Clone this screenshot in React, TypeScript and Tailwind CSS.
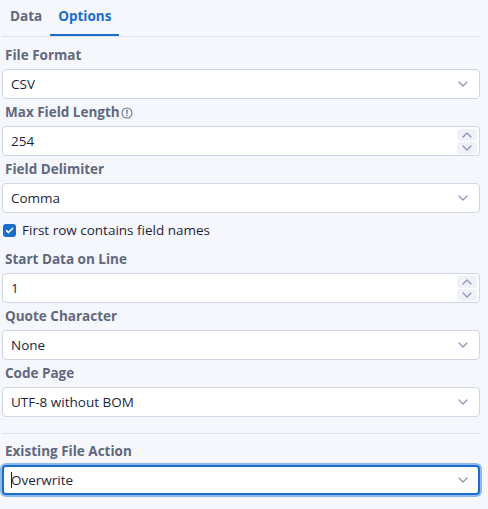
import React from "react";

const font = { fontFamily: '"Open Sans", "Noto Sans", sans-serif' };

function Chevron({ up = false }: { up?: boolean }) {
  return (
    <svg width="10" height="6" viewBox="0 0 10 6" className={up ? "rotate-180" : ""}>
      <path d="M1 1l4 4 4-4" fill="none" stroke="#8a93b4" strokeWidth="1.2" strokeLinecap="round" strokeLinejoin="round" />
    </svg>
  );
}

function Label({ children }: { children: React.ReactNode }) {
  return (
    <div className="h-[27px] flex items-center pl-[3px] text-[13.5px] font-bold text-[#61687d]">
      {children}
    </div>
  );
}

function Select({ value, focused = false }: { value: string; focused?: boolean }) {
  return (
    <div
      className={
        focused
          ? "h-[30px] flex items-center justify-between bg-white rounded-[4px] border-2 border-[#1b6dcc] ring-2 ring-[#8dbbf0] pl-[7px] pr-[10px]"
          : "h-[30px] flex items-center justify-between bg-white rounded-[4px] border border-[#cfd5e5] pl-[8px] pr-[11px]"
      }
    >
      <span className="text-[13.5px] text-[#1e1f3b] flex items-center">
        {focused && <span className="w-px h-[16px] bg-[#1e1f3b] -mr-px" />}
        {value}
      </span>
      <Chevron />
    </div>
  );
}

function NumberInput({ value }: { value: string }) {
  return (
    <div className="h-[30px] flex items-center justify-between bg-white rounded-[4px] border border-[#cfd5e5] pl-[8px] pr-[2px]">
      <span className="text-[13.5px] text-[#1e1f3b]">{value}</span>
      <div className="flex flex-col gap-px">
        <div className="w-[20px] h-[12px] rounded-[3px] bg-[#eef1f8] flex items-center justify-center">
          <Chevron up />
        </div>
        <div className="w-[20px] h-[12px] rounded-[3px] bg-[#eef1f8] flex items-center justify-center">
          <Chevron />
        </div>
      </div>
    </div>
  );
}

export default function App() {
  return (
    <div className="w-[488px] h-[509px] bg-[#f5f7fc] pl-[2px] pr-[8px] overflow-hidden" style={font}>
      <div className="flex border-b border-[#dfe3ec] h-[37px]">
        <div className="px-2 h-full flex items-center pb-[4px] text-[13.5px] font-bold text-[#61687d]">Data</div>
        <div className="px-2 h-full flex items-center pb-[2px] text-[13.5px] font-bold text-[#1b6dcc] border-b-2 border-[#1b6dcc]">
          Options
        </div>
      </div>

      <div className="pt-[5px]">
        <Label>File Format</Label>
        <Select value="CSV" />

        <Label>
          Max Field Length
          <svg width="12" height="12" viewBox="0 0 12 12" className="ml-px">
            <circle cx="6" cy="6" r="5" fill="none" stroke="#6b7286" strokeWidth="1.1" />
            <path d="M6 3.2v3.4" stroke="#6b7286" strokeWidth="1.3" strokeLinecap="round" />
            <circle cx="6" cy="8.6" r="0.75" fill="#6b7286" />
          </svg>
        </Label>
        <NumberInput value="254" />

        <Label>Field Delimiter</Label>
        <Select value="Comma" />

        <div className="h-[33px] flex items-center pt-[2px] pl-px gap-[6px]">
          <div className="w-[13px] h-[13px] rounded-[3px] bg-[#1b6dcc] flex items-center justify-center">
            <svg width="9" height="9" viewBox="0 0 9 9">
              <path d="M1.5 4.6l2 2 4-4.2" fill="none" stroke="white" strokeWidth="1.5" strokeLinecap="round" strokeLinejoin="round" />
            </svg>
          </div>
          <span className="text-[13.5px] text-[#1e1f3b]">First row contains field names</span>
        </div>

        <Label>Start Data on Line</Label>
        <NumberInput value="1" />

        <Label>Quote Character</Label>
        <Select value="None" />

        <Label>Code Page</Label>
        <Select value="UTF-8 without BOM" />

        <div className="mt-[16px] border-t border-[#dfe3ec] pt-[4px]">
          <Label>Existing File Action</Label>
          <Select value="Overwrite" focused />
        </div>
      </div>
    </div>
  );
}
